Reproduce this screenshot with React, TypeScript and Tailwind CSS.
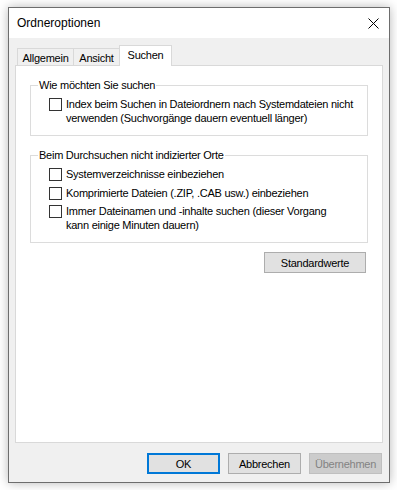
import React from 'react'

function Box({ label, textClass }: { label: string; textClass?: string }) {
  return (
    <div className="flex items-start gap-[4px]">
      <span className="mt-[1px] block h-[13px] w-[13px] shrink-0 border border-[#333333] bg-white" />
      <span className={textClass}>{label}</span>
    </div>
  )
}

function Btn({ children, primary, disabled, className }: { children: React.ReactNode; primary?: boolean; disabled?: boolean; className?: string }) {
  const look = primary
    ? 'border-2 border-[#0078d7] bg-[#e1e1e1] text-black'
    : disabled
      ? 'border border-[#bfbfbf] bg-[#cccccc] text-[#838383]'
      : 'border border-[#adadad] bg-[#e1e1e1] text-black'
  return (
    <button type="button" className={`flex items-center justify-center ${look} ${className ?? ''}`}>
      {children}
    </button>
  )
}

export default function App() {
  return (
    <div className="h-[490px] w-[397px] bg-white pl-[8px] pt-[7px] font-['Liberation_Sans',Arial,sans-serif] text-[11px] leading-[14px] tracking-[-0.25px] text-black">
      <div className="flex h-[476px] w-[382px] flex-col border border-[#6d6d6d] bg-[#f0f0f0] shadow-[0_0_10px_rgba(0,0,0,0.28)]">
        {/* title bar */}
        <div className="flex h-[30px] shrink-0 items-center justify-between bg-white pl-[8px] pr-[10px]">
          <span className="text-[12px] tracking-normal">Ordneroptionen</span>
          <svg width="11" height="11" viewBox="0 0 11 11">
            <path d="M0.5 0.5 L10.5 10.5 M10.5 0.5 L0.5 10.5" stroke="#000" strokeWidth="1" fill="none" />
          </svg>
        </div>

        <div className="flex flex-1 flex-col px-[6px] pt-[7px]">
          {/* tabs */}
          <div className="flex items-end pl-[2px]">
            <div className="mb-px flex h-[17px] w-[57px] items-center justify-center border border-b-0 border-[#d9d9d9] bg-[#f0f0f0] pt-[1px]">
              Allgemein
            </div>
            <div className="-ml-px mb-px flex h-[17px] w-[47px] items-center justify-center border border-b-0 border-[#d9d9d9] bg-[#f0f0f0] pt-[1px]">
              Ansicht
            </div>
            <div className="relative z-10 -ml-px flex h-[21px] w-[53px] items-center justify-center border border-b-0 border-[#d9d9d9] bg-white pb-[3px]">
              Suchen
            </div>
          </div>

          {/* panel */}
          <div className="-mt-px flex flex-1 flex-col border border-[#d9d9d9] bg-white px-[14px] pt-[12px]">
            <fieldset className="border border-[#dcdcdc] px-[7px] pb-[10px]">
              <legend className="px-[1px]">Wie möchten Sie suchen</legend>
              <div className="mt-[5px] pl-[11px]">
                <Box label="Index beim Suchen in Dateiordnern nach Systemdateien nicht verwenden (Suchvorgänge dauern eventuell länger)" />
              </div>
            </fieldset>

            <fieldset className="mt-[12px] border border-[#dcdcdc] px-[7px] pb-[10px]">
              <legend className="px-[1px]">Beim Durchsuchen nicht indizierter Orte</legend>
              <div className="mt-[5px] flex flex-col pl-[11px]">
                <Box label="Systemverzeichnisse einbeziehen" />
                <div className="mt-[5px]">
                  <Box label="Komprimierte Dateien (.ZIP, .CAB usw.) einbeziehen" />
                </div>
                <div className="mt-[4px]">
                  <Box textClass="w-[272px]" label="Immer Dateinamen und -inhalte suchen (dieser Vorgang kann einige Minuten dauern)" />
                </div>
              </div>
            </fieldset>

            <div className="mt-[9px] flex justify-end pr-[2px]">
              <Btn className="h-[21px] w-[102px]">Standardwerte</Btn>
            </div>
          </div>

          {/* footer buttons */}
          <div className="mb-[8px] mt-[10px] flex justify-end gap-[8px] pr-[1px]">
            <Btn primary className="h-[21px] w-[73px]">OK</Btn>
            <Btn className="h-[21px] w-[73px]">Abbrechen</Btn>
            <Btn disabled className="h-[21px] w-[73px]">Übernehmen</Btn>
          </div>
        </div>
      </div>
    </div>
  )
}
